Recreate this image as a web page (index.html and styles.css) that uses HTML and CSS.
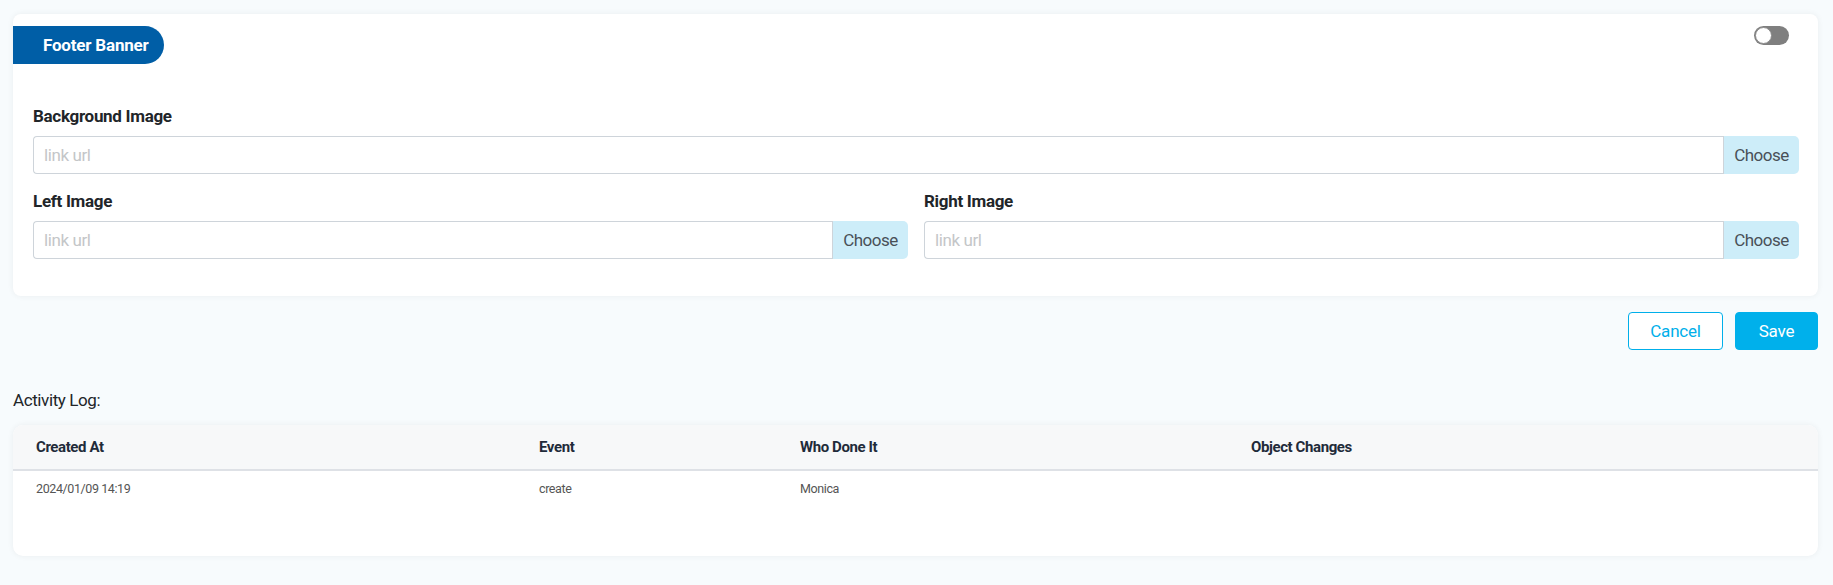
FILE: index.html
```html
<!DOCTYPE html>
<html lang="en">
<head>
<meta charset="utf-8">
<title>Footer Banner</title>
<link rel="stylesheet" href="styles.css">
</head>
<body>
  <section class="card">
    <div class="card-head">
      <div class="banner-tab">Footer Banner</div>
      <span class="switch"><span class="knob"></span></span>
    </div>
    <div class="card-body">
      <div class="field">
        <label class="field-label">Background Image</label>
        <div class="input-group">
          <input class="text-input" type="text" placeholder="link url">
          <button class="choose-btn" type="button">Choose</button>
        </div>
      </div>
      <div class="field-row">
        <div class="field">
          <label class="field-label">Left Image</label>
          <div class="input-group">
            <input class="text-input" type="text" placeholder="link url">
            <button class="choose-btn" type="button">Choose</button>
          </div>
        </div>
        <div class="field">
          <label class="field-label">Right Image</label>
          <div class="input-group">
            <input class="text-input" type="text" placeholder="link url">
            <button class="choose-btn" type="button">Choose</button>
          </div>
        </div>
      </div>
    </div>
  </section>

  <div class="actions">
    <button class="btn btn-outline" type="button">Cancel</button>
    <button class="btn btn-primary" type="button">Save</button>
  </div>

  <h2 class="log-title">Activity Log:</h2>
  <div class="log-card">
    <table class="log-table">
      <colgroup>
        <col class="c1"><col class="c2"><col class="c3"><col class="c4">
      </colgroup>
      <thead>
        <tr>
          <th>Created At</th>
          <th>Event</th>
          <th>Who Done It</th>
          <th>Object Changes</th>
        </tr>
      </thead>
      <tbody>
        <tr>
          <td>2024/01/09 14:19</td>
          <td>create</td>
          <td>Monica</td>
          <td></td>
        </tr>
      </tbody>
    </table>
  </div>
</body>
</html>
```

FILE: styles.css
```css
* { box-sizing: border-box; }

body {
  margin: 0;
  padding: 14px 15px 10px 13px;
  background: #f7fbfd;
  font-family: Roboto, "Noto Sans", sans-serif;
  color: #212529;
}

.card {
  background: #fff;
  border-radius: 8px;
  box-shadow: 0 0 6px rgba(0, 0, 0, 0.06);
  padding: 12px 0 37px;
}

.card-head {
  display: flex;
  justify-content: space-between;
  align-items: flex-start;
}

.banner-tab {
  width: 151px;
  height: 38px;
  background: #005ea6;
  color: #fff;
  font-weight: 700;
  font-size: 17px;
  line-height: 38px;
  padding-left: 30px;
  border-radius: 0 19px 19px 0;
  letter-spacing: -0.2px;
}

.switch {
  position: relative;
  display: block;
  width: 35px;
  height: 19px;
  margin-right: 29px;
  border-radius: 10px;
  background: #7f7f7f;
}

.knob {
  position: absolute;
  left: 1px;
  top: 1px;
  width: 17px;
  height: 17px;
  border-radius: 50%;
  background: #fff;
  border: 1px solid #8a8a8a;
}

.card-body {
  padding: 42px 19px 0 20px;
}

.field-label {
  display: block;
  font-size: 17px;
  font-weight: 700;
  line-height: 20px;
  margin-bottom: 10px;
  color: #212529;
  letter-spacing: -0.3px;
}

.field-row {
  display: grid;
  grid-template-columns: 1fr 1fr;
  column-gap: 16px;
  margin-top: 17px;
}

.input-group {
  display: flex;
  height: 38px;
}

.text-input {
  flex: 1;
  min-width: 0;
  height: 38px;
  border: 1px solid #ced4da;
  border-right: 0;
  border-radius: 4px 0 0 4px;
  padding: 0 12px 0 10px;
  font-family: inherit;
  font-size: 17px;
  color: #495057;
  outline: none;
}

.text-input::placeholder {
  color: #c4c6c8;
  letter-spacing: -0.4px;
}

.choose-btn {
  width: 76px;
  height: 38px;
  border: 0;
  border-left: 1px solid #ced4da;
  border-radius: 0 5px 5px 0;
  background: #cdedf9;
  color: #495057;
  font-family: inherit;
  font-size: 17px;
  letter-spacing: -0.5px;
  padding: 0;
}

.actions {
  display: flex;
  justify-content: flex-end;
  gap: 12px;
  margin-top: 16px;
}

.btn {
  height: 38px;
  border-radius: 4px;
  font-family: inherit;
  font-size: 17px;
  letter-spacing: -0.2px;
  padding: 0;
}

.btn-outline {
  width: 95px;
  background: #fff;
  border: 1px solid #00afea;
  color: #00afea;
}

.btn-primary {
  width: 83px;
  background: #00b0eb;
  border: 1px solid #00b0eb;
  color: #fff;
}

.log-title {
  margin: 40px 0 15px;
  font-size: 17px;
  font-weight: 400;
  line-height: 20px;
  color: #212529;
  letter-spacing: -0.4px;
}

.log-card {
  background: #fff;
  border-radius: 10px;
  box-shadow: 0 0 6px rgba(0, 0, 0, 0.06);
  overflow: hidden;
  height: 131px;
}

.log-table {
  width: 100%;
  border-collapse: collapse;
  table-layout: fixed;
}

.c1 { width: 503px; }
.c2 { width: 261px; }
.c3 { width: 451px; }

.log-table th {
  height: 45px;
  background: #f7f8f9;
  border-bottom: 2px solid #dee1e6;
  text-align: left;
  padding: 0 0 0 23px;
  font-size: 15px;
  font-weight: 700;
  color: #1f2b3a;
  letter-spacing: -0.4px;
}

.log-table td {
  padding: 10px 0 0 23px;
  font-size: 12.5px;
  line-height: 16px;
  color: #555;
  vertical-align: top;
  letter-spacing: -0.4px;
}
```
